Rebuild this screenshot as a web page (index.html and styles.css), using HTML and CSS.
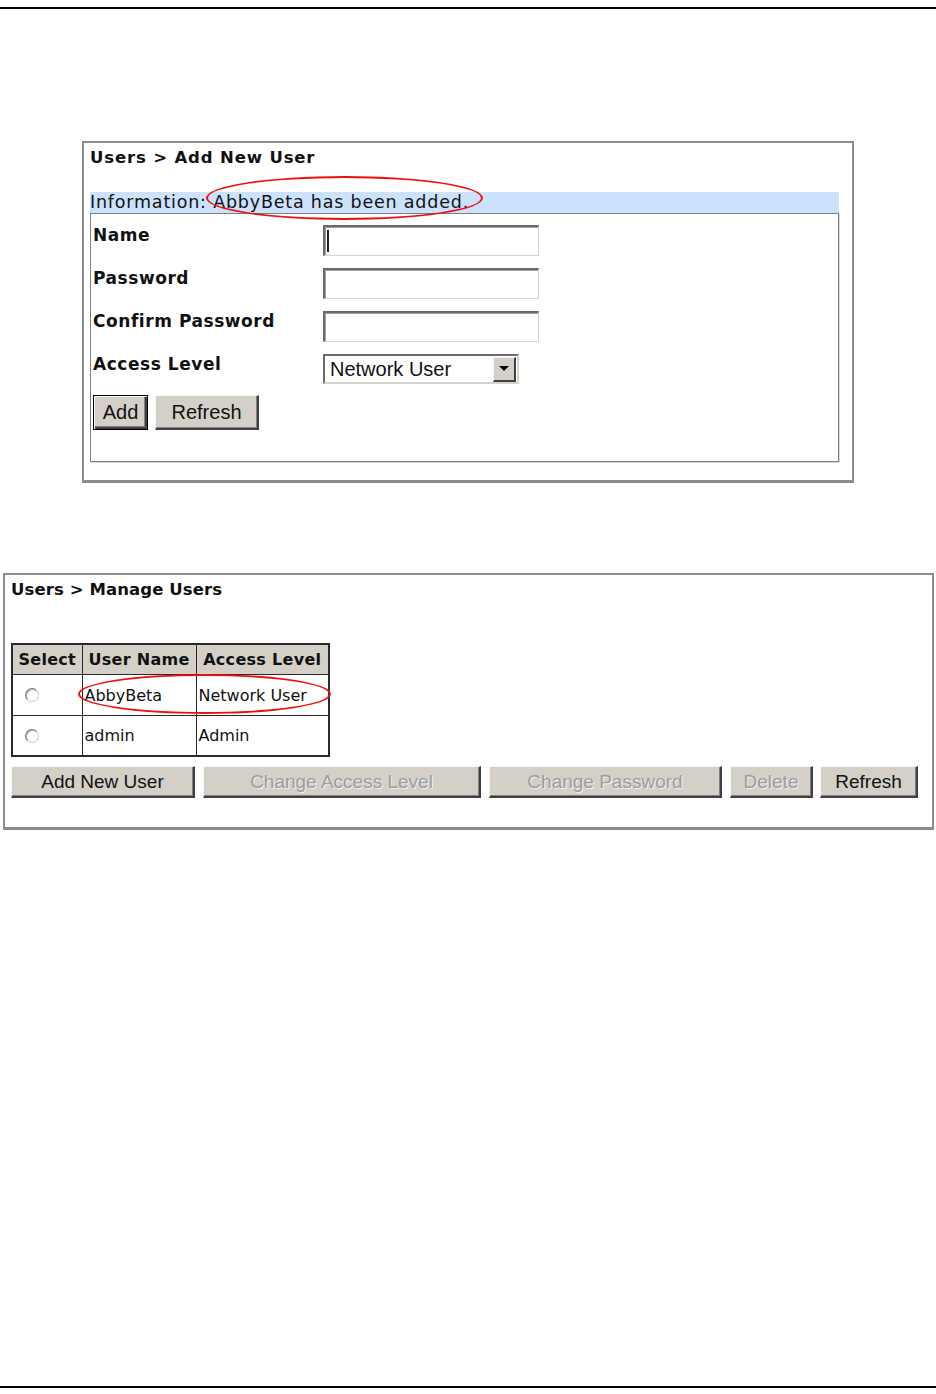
FILE: index.html
```html
<!DOCTYPE html>
<html>
<head>
<meta charset="utf-8">
<link rel="stylesheet" href="styles.css">
</head>
<body>
<div class="rule rule-top"></div>

<section class="panel panel-add">
  <div class="title">Users &gt; Add New User</div>
  <div class="info">Information: AbbyBeta has been added.</div>
  <div class="inner">
    <div class="row"><span class="label">Name</span><span class="input"><span class="caret"></span></span></div>
    <div class="row"><span class="label">Password</span><span class="input"></span></div>
    <div class="row"><span class="label">Confirm Password</span><span class="input"></span></div>
    <div class="row"><span class="label">Access Level</span>
      <span class="select"><span class="select-text">Network User</span><span class="select-btn"><span class="tri"></span></span></span>
    </div>
    <div class="actions">
      <span class="btn btn-default btn-add">Add</span>
      <span class="btn btn-refresh1">Refresh</span>
    </div>
  </div>
  <span class="mark mark-info"></span>
</section>

<section class="panel panel-manage">
  <div class="title">Users &gt; Manage Users</div>
  <table class="users">
    <colgroup><col class="c1"><col class="c2"><col class="c3"></colgroup>
    <tr class="head"><th>Select</th><th>User Name</th><th>Access Level</th></tr>
    <tr class="r1"><td><span class="radio"></span></td><td>AbbyBeta</td><td>Network User</td></tr>
    <tr class="r2"><td><span class="radio"></span></td><td>admin</td><td>Admin</td></tr>
  </table>
  <div class="actions2">
    <span class="btn b-add">Add New User</span>
    <span class="btn disabled b-cal">Change Access Level</span>
    <span class="btn disabled b-cp">Change Password</span>
    <span class="btn disabled b-del">Delete</span>
    <span class="btn b-ref">Refresh</span>
  </div>
  <span class="mark mark-row"></span>
</section>

<div class="rule rule-bottom"></div>
</body>
</html>
```

FILE: styles.css
```css
html, body {
  margin: 0;
  padding: 0;
  background: #fff;
}
body {
  min-height: 1394px;
  display: flex;
  flex-direction: column;
  font-family: "DejaVu Sans", Verdana, sans-serif;
  color: #000;
}
.rule {
  height: 2px;
  background: #000;
  width: 100%;
  flex: none;
}
.rule-top { margin-top: 7px; }
.rule-bottom { margin-top: auto; margin-bottom: 6px; }

.panel {
  position: relative;
  box-sizing: border-box;
  border: 2px solid #8c8c8c;
  border-bottom-width: 3px;
  flex: none;
}
.title {
  font-weight: bold;
  font-size: 16.5px;
  line-height: 20px;
  height: 20px;
  white-space: nowrap;
  color: #111;
}

/* Panel 1 */
.panel-add {
  margin: 132px 0 0 82px;
  width: 772px;
  height: 342px;
  padding: 5px 13px 19px 6px;
}
.panel-add .title { margin-bottom: 24px; letter-spacing: 0.85px; }
.info {
  height: 21px;
  line-height: 21px;
  background: #cce2fc;
  font-size: 17.5px;
  letter-spacing: 0.8px;
  white-space: nowrap;
  color: #111;
}
.inner {
  box-sizing: border-box;
  height: 249px;
  border: 1px solid #7f7f7f;
  box-shadow: 1px 1px 0 #d9d9d9;
  padding: 11px 0 0 2px;
}
.row {
  display: grid;
  grid-template-columns: 230px 216px;
  height: 31px;
  margin-bottom: 12px;
}
.label {
  font-weight: bold;
  font-size: 17px;
  letter-spacing: 0.55px;
  line-height: 20px;
  white-space: nowrap;
  color: #111;
}
.input {
  box-sizing: border-box;
  height: 31px;
  background: #fff;
  border-style: solid;
  border-width: 2px 1px 1px 2px;
  border-color: #6a6a6a #d6d3cc #d6d3cc #6a6a6a;
  box-shadow: inset 1px 1px 0 #a0a0a0;
  display: flex;
  align-items: center;
  padding-left: 2px;
}
.caret {
  width: 2px;
  height: 22px;
  background: #222;
}
.select {
  box-sizing: border-box;
  width: 196px;
  height: 30px;
  background: #fff;
  border-style: solid;
  border-width: 2px;
  border-color: #6a6a6a #d6d3cc #d6d3cc #6a6a6a;
  display: flex;
  align-items: center;
  justify-content: space-between;
  font-family: "Liberation Sans", Arial, sans-serif;
  font-size: 20px;
  color: #111;
}
.select-text { padding-left: 5px; }
.select-btn {
  box-sizing: border-box;
  width: 23px;
  height: 25px;
  margin-right: 1px;
  background: #d4d0c8;
  border-style: solid;
  border-width: 1px 2px 2px 1px;
  border-color: #f4f4f4 #404040 #404040 #f4f4f4;
  display: flex;
  align-items: center;
  justify-content: center;
}
.tri {
  width: 0;
  height: 0;
  border-left: 5px solid transparent;
  border-right: 5px solid transparent;
  border-top: 5px solid #000;
}
.actions {
  display: flex;
  gap: 7px;
  margin-top: -2px;
}

.btn {
  box-sizing: border-box;
  display: inline-flex;
  align-items: center;
  justify-content: center;
  background: #d4d0c8;
  border-style: solid;
  border-width: 1px 2px 2px 1px;
  border-color: #f7f7f7 #404040 #404040 #f7f7f7;
  box-shadow: inset -1px -1px 0 #808080;
  font-family: "Liberation Sans", Arial, sans-serif;
  font-size: 19px;
  color: #111;
  white-space: nowrap;
}
.btn-add, .btn-refresh1 { height: 35px; font-size: 20px; }
.btn-add { width: 55px; }
.btn-refresh1 { width: 104px; }
.btn-default {
  border: 1px solid #000;
  box-shadow: inset 1px 1px 0 #f7f7f7, inset -2px -2px 0 #404040, inset -3px -3px 0 #808080;
}
.disabled {
  color: #9c9c9c;
  text-shadow: 1px 1px 0 #f2f2f2;
}

/* Panel 2 */
.panel-manage {
  margin: 90px 0 0 3px;
  width: 931px;
  height: 257px;
  padding: 5px 0 0 6px;
}
.panel-manage .title { margin-bottom: 43px; letter-spacing: 0.1px; }
.users {
  border-collapse: collapse;
  table-layout: fixed;
  width: 317px;
  font-size: 16px;
  border: 2px solid #2a2a2a;
}
.c1 { width: 70px; }
.c2 { width: 114px; }
.c3 { width: 133px; }
.users th, .users td {
  border: 1px solid #2a2a2a;
  padding: 0 0 0 3px;
  white-space: nowrap;
  text-align: left;
  color: #111;
}
.users td { padding-left: 2px; }
.users th {
  background: #d4d0c8;
  font-weight: bold;
  text-align: center;
  padding: 0;
  height: 29px;
  letter-spacing: 0.3px;
}
.r1 td { height: 40px; }
.r2 td { height: 39px; }
.users td:first-child { padding-left: 12px; }
.radio {
  display: block;
  box-sizing: border-box;
  width: 14px;
  height: 14px;
  border-radius: 50%;
  background: #fff;
  border: 1px solid;
  border-color: #7a7a7a #d0d0d0 #d0d0d0 #7a7a7a;
  box-shadow: inset 1px 1px 0 #b0b0b0;
}
.actions2 {
  display: flex;
  gap: 7px;
  margin-top: 9px;
}
.actions2 .btn { height: 32px; }
.b-add { width: 184px; }
.b-cal { width: 278px; margin-left: 1px; }
.b-cp { width: 233px; margin-left: 1px; }
.b-del { width: 83px; margin-left: 1px; }
.b-ref { width: 98px; }

/* red annotation marks */
.mark {
  position: absolute;
  box-sizing: border-box;
  border: 2px solid #ee1111;
  border-radius: 50%;
  pointer-events: none;
}
.mark-info { left: 122px; top: 33px; width: 277px; height: 44px; }
.mark-row { left: 73px; top: 99px; width: 253px; height: 40px; }
```
